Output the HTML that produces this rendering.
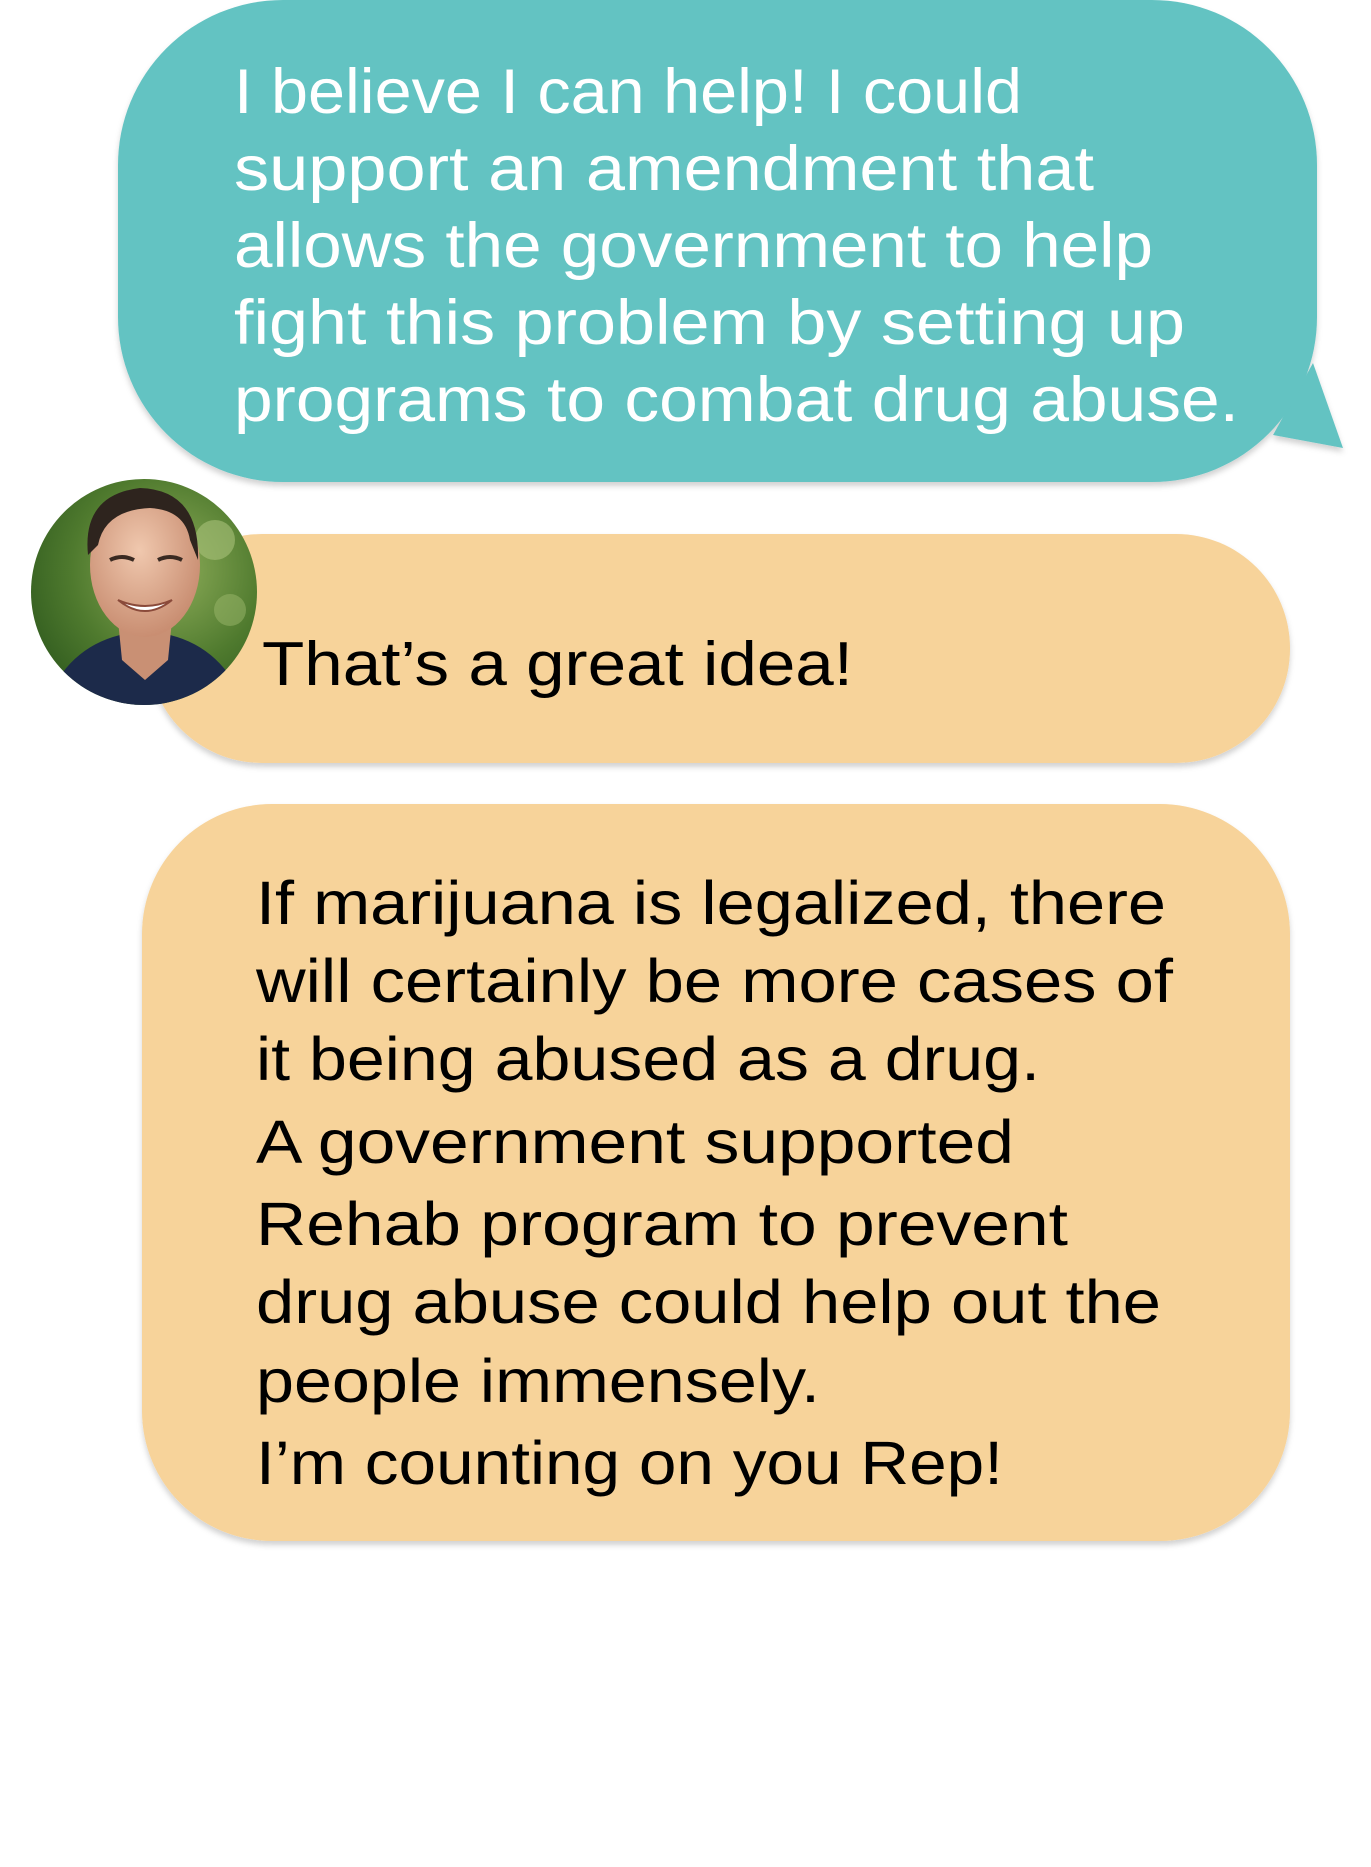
<!DOCTYPE html>
<html><head><meta charset="utf-8"><style>
html,body{margin:0;padding:0;background:#fff;width:1371px;height:1867px;overflow:hidden}
svg{display:block}
text{font-family:"Liberation Sans",sans-serif}
</style></head><body>
<svg width="1371" height="1867" viewBox="0 0 1371 1867" xmlns="http://www.w3.org/2000/svg">
<defs>
<filter id="sh" x="-5%" y="-5%" width="110%" height="115%"><feDropShadow dx="0" dy="4" stdDeviation="3" flood-color="#000" flood-opacity="0.18"/></filter>
<clipPath id="av"><circle cx="144" cy="592" r="113"/></clipPath>
<radialGradient id="bg" cx="0.6" cy="0.4" r="0.7"><stop offset="0" stop-color="#8fae5a"/><stop offset="0.6" stop-color="#4f7a2e"/><stop offset="1" stop-color="#2f5a1e"/></radialGradient>
<radialGradient id="skin" cx="0.45" cy="0.4" r="0.6"><stop offset="0" stop-color="#f0c8ae"/><stop offset="1" stop-color="#c98e72"/></radialGradient>
</defs>
<g filter="url(#sh)">
<path d="M1313 363 L1343 448 L1273 435 Z" fill="#64c3c2"/>
<rect x="118" y="0" width="1199" height="482" rx="165" ry="165" fill="#64c3c2"/>
</g>
<g fill="#fff" font-size="63">
<text x="234" y="113" textLength="788" lengthAdjust="spacingAndGlyphs">I believe I can help! I could</text>
<text x="234" y="190" textLength="860" lengthAdjust="spacingAndGlyphs">support an amendment that</text>
<text x="234" y="267" textLength="919" lengthAdjust="spacingAndGlyphs">allows the government to help</text>
<text x="234" y="344" textLength="951" lengthAdjust="spacingAndGlyphs">fight this problem by setting up</text>
<text x="234" y="421" textLength="1005" lengthAdjust="spacingAndGlyphs">programs to combat drug abuse.</text>
</g>
<rect x="148" y="534" width="1142" height="229" rx="114" ry="114" fill="#f7d39a" filter="url(#sh)"/>
<text x="262" y="685" font-size="62" fill="#000" textLength="591" lengthAdjust="spacingAndGlyphs">That’s a great idea!</text>
<g clip-path="url(#av)">
<rect x="30" y="478" width="230" height="230" fill="url(#bg)"/>
<circle cx="215" cy="540" r="20" fill="#a9c27a" opacity="0.6"/>
<circle cx="230" cy="610" r="16" fill="#9bb86c" opacity="0.5"/>
<path d="M40 720 Q60 650 120 635 L170 635 Q230 650 250 720 Z" fill="#1c2a4a"/>
<path d="M118 620 L172 620 L168 660 L145 680 L122 660 Z" fill="#c99074"/>
<ellipse cx="145" cy="565" rx="55" ry="72" fill="url(#skin)"/>
<path d="M88 555 Q82 495 140 488 Q200 490 198 560 L190 540 Q185 510 150 508 Q105 510 98 545 Z" fill="#2e241e"/>
<path d="M110 560 Q122 554 134 560" stroke="#3a2a22" stroke-width="4" fill="none"/>
<path d="M158 560 Q170 554 182 560" stroke="#3a2a22" stroke-width="4" fill="none"/>
<path d="M118 600 Q145 622 172 600 Q145 612 118 600 Z" fill="#fff" stroke="#8a4a3a" stroke-width="2"/>
</g>
<rect x="142" y="804" width="1148" height="737" rx="130" ry="130" fill="#f7d39a" filter="url(#sh)"/>
<g fill="#000" font-size="61">
<text x="256" y="924" textLength="910" lengthAdjust="spacingAndGlyphs">If marijuana is legalized, there</text>
<text x="256" y="1002" textLength="917" lengthAdjust="spacingAndGlyphs">will certainly be more cases of</text>
<text x="256" y="1080" textLength="784" lengthAdjust="spacingAndGlyphs">it being abused as a drug.</text>
<text x="256" y="1163" textLength="758" lengthAdjust="spacingAndGlyphs">A government supported</text>
<text x="256" y="1245" textLength="812" lengthAdjust="spacingAndGlyphs">Rehab program to prevent</text>
<text x="256" y="1323" textLength="905" lengthAdjust="spacingAndGlyphs">drug abuse could help out the</text>
<text x="256" y="1402" textLength="564" lengthAdjust="spacingAndGlyphs">people immensely.</text>
<text x="256" y="1484" textLength="747" lengthAdjust="spacingAndGlyphs">I’m counting on you Rep!</text>
</g>
</svg>
</body></html>
